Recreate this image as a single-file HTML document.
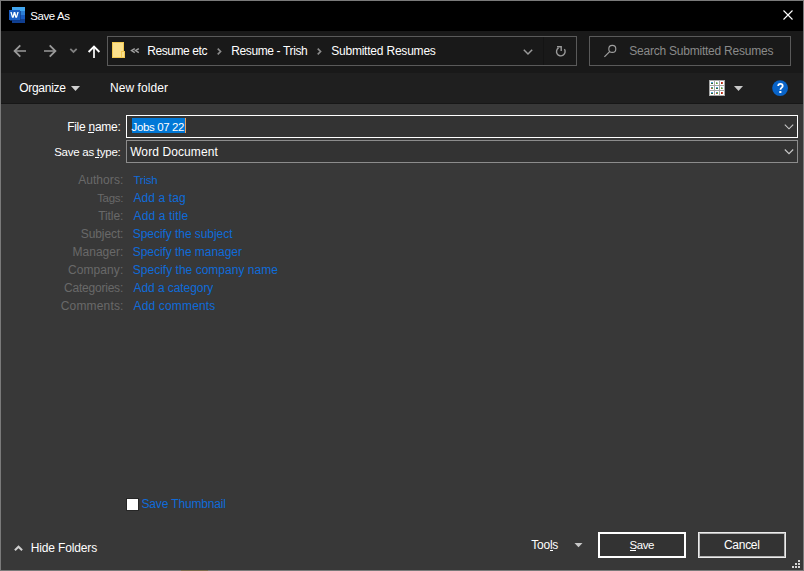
<!DOCTYPE html>
<html><head><meta charset="utf-8">
<style>
*{margin:0;padding:0;box-sizing:border-box}
html,body{width:804px;height:571px;overflow:hidden;background:#383838}
body{position:relative;font-family:"Liberation Sans",sans-serif;font-size:12px;color:#fff}
.a{position:absolute;white-space:nowrap;line-height:12px}
#frame{position:absolute;left:0;top:0;width:804px;height:571px;border:1px solid #7a7a7a}
#title{position:absolute;left:1px;top:1px;width:802px;height:30px;background:#000}
#nav{position:absolute;left:1px;top:31px;width:802px;height:42px;background:#191919}
#cmd{position:absolute;left:1px;top:73px;width:802px;height:31px;background:#1f1f1f;border-bottom:1px solid #171717}
#addr{position:absolute;left:107px;top:36px;width:470px;height:30px;border:1px solid #5a5a5a;background:#191919}
#search{position:absolute;left:589px;top:36px;width:202px;height:30px;border:1px solid #5a5a5a;background:#191919}
.inp{position:absolute;background:#333}
.btn{position:absolute;background:#333}
svg{position:absolute;left:0;top:0}

</style></head><body>
<div id="title"></div>
<div id="nav"></div>
<div id="cmd"></div>
<div id="addr"></div>
<div id="search"></div>
<div class="inp" style="left:126px;top:115px;width:672px;height:23px;border:1px solid #fff"></div>
<div class="inp" style="left:126px;top:140px;width:672px;height:23px;border:1px solid #8c8c8c"></div>
<div class="a" style="left:132px;top:118px;width:53px;height:15px;background:#0078d7"></div>
<div class="a" style="left:185px;top:118px;width:1px;height:15px;background:#e8a060"></div>
<div class="a" style="left:126px;top:498px;width:13px;height:13px;background:#fff;border:1px solid #262626"></div>
<div class="btn" style="left:598px;top:532px;width:88px;height:26px;border:2px solid #fff"></div>
<div class="btn" style="left:698px;top:532px;width:88px;height:26px;border:1px solid #ececec;box-shadow:inset 0 0 0 1px #b4b4b4"></div>
<div class="a" style="left:88px;top:132px;width:6px;height:1px;background:#fff"></div>
<div class="a" style="left:95px;top:157px;width:4px;height:1px;background:#fff"></div>
<div class="a" style="left:550px;top:550px;width:3px;height:1px;background:#fff"></div>
<div class="a" style="left:630px;top:550px;width:6px;height:1px;background:#fff"></div>

<div id="t_title" class="a" style="left:30.17px;top:10px;letter-spacing:-0.375px;color:#ffffff;font-size:11.5px">Save As</div>
<div id="t_r1" class="a" style="left:147.15px;top:45px;letter-spacing:-0.407px;color:#ffffff;font-size:12px">Resume etc</div>
<div id="t_r2" class="a" style="left:231.15px;top:45px;letter-spacing:-0.363px;color:#ffffff;font-size:12px">Resume - Trish</div>
<div id="t_r3" class="a" style="left:331.17px;top:45px;letter-spacing:-0.209px;color:#ffffff;font-size:12px">Submitted Resumes</div>
<div id="t_srch" class="a" style="left:629.30px;top:45px;letter-spacing:-0.230px;color:#8a8a8a;font-size:12px">Search Submitted Resumes</div>
<div id="t_org" class="a" style="left:19.15px;top:82px;letter-spacing:-0.271px;color:#ffffff;font-size:12px">Organize</div>
<div id="t_nf" class="a" style="left:109.98px;top:82px;letter-spacing:0.077px;color:#ffffff;font-size:12px">New folder</div>
<div id="t_fn" class="a" style="left:67.15px;top:121px;letter-spacing:-0.256px;color:#ffffff;font-size:12px">File name:</div>
<div id="t_st" class="a" style="left:54.15px;top:146px;letter-spacing:-0.254px;color:#ffffff;font-size:11.5px">Save as type:</div>
<div id="t_job" class="a" style="left:131.49px;top:121px;letter-spacing:-0.359px;color:#ffffff;font-size:11.5px">Jobs 07 22</div>
<div id="t_wd" class="a" style="left:130.17px;top:146px;letter-spacing:0.097px;color:#ffffff;font-size:12px">Word Document</div>
<div id="l1" class="a" style="left:78.15px;top:174px;letter-spacing:0.066px;color:#696969;font-size:12px">Authors:</div>
<div id="l2" class="a" style="left:97.13px;top:192px;letter-spacing:-0.318px;color:#696969;font-size:11.5px">Tags:</div>
<div id="l3" class="a" style="left:98.15px;top:210px;letter-spacing:-0.058px;color:#696969;font-size:12px">Title:</div>
<div id="l4" class="a" style="left:80.81px;top:228px;letter-spacing:-0.100px;color:#696969;font-size:12px">Subject:</div>
<div id="l5" class="a" style="left:72.62px;top:246px;letter-spacing:-0.001px;color:#696969;font-size:12px">Manager:</div>
<div id="l6" class="a" style="left:67.98px;top:264px;letter-spacing:0.090px;color:#696969;font-size:12px">Company:</div>
<div id="l7" class="a" style="left:63.98px;top:282px;letter-spacing:-0.212px;color:#696969;font-size:12px">Categories:</div>
<div id="l8" class="a" style="left:60.81px;top:300px;letter-spacing:0.162px;color:#696969;font-size:12px">Comments:</div>
<div id="k1" class="a" style="left:133.49px;top:174px;letter-spacing:-0.217px;color:#0f6bd8;font-size:11.5px">Trish</div>
<div id="k2" class="a" style="left:133.49px;top:192px;letter-spacing:0.091px;color:#0f6bd8;font-size:12px">Add a tag</div>
<div id="k3" class="a" style="left:133.49px;top:210px;letter-spacing:0.139px;color:#0f6bd8;font-size:12px">Add a title</div>
<div id="k4" class="a" style="left:132.79px;top:228px;letter-spacing:-0.057px;color:#0f6bd8;font-size:12px">Specify the subject</div>
<div id="k5" class="a" style="left:132.79px;top:246px;letter-spacing:-0.052px;color:#0f6bd8;font-size:12px">Specify the manager</div>
<div id="k6" class="a" style="left:132.79px;top:264px;letter-spacing:0.013px;color:#0f6bd8;font-size:12px">Specify the company name</div>
<div id="k7" class="a" style="left:133.49px;top:282px;letter-spacing:-0.069px;color:#0f6bd8;font-size:12px">Add a category</div>
<div id="k8" class="a" style="left:133.49px;top:300px;letter-spacing:0.168px;color:#0f6bd8;font-size:12px">Add comments</div>
<div id="t_thumb" class="a" style="left:141.47px;top:498px;letter-spacing:-0.148px;color:#0f6bd8;font-size:12px">Save Thumbnail</div>
<div id="t_hide" class="a" style="left:30.81px;top:542px;letter-spacing:-0.149px;color:#ffffff;font-size:12px">Hide Folders</div>
<div id="t_tools" class="a" style="left:531.34px;top:539px;letter-spacing:-0.250px;color:#ffffff;font-size:12px">Tools</div>
<div id="t_save" class="a" style="left:629.49px;top:539px;letter-spacing:-0.410px;color:#ffffff;font-size:11.5px">Save</div>
<div id="t_cancel" class="a" style="left:723.98px;top:539px;letter-spacing:-0.280px;color:#ffffff;font-size:12px">Cancel</div>
<svg width="804" height="571" viewBox="0 0 804 571">
<!-- word icon -->
<rect x="12" y="7" width="13" height="16" fill="#41a5ee"/>
<rect x="12" y="11" width="13" height="4" fill="#2b7cd3"/>
<rect x="12" y="15" width="13" height="4" fill="#185abd"/>
<rect x="12" y="19" width="13" height="4" fill="#103f91"/>
<rect x="10" y="11" width="11" height="10" fill="#0d3a85" opacity="0.7"/><rect x="9" y="10" width="11" height="10" fill="#1a5cc2"/>
<path d="M10.3 11.9 L12 17.8 L13.6 17.8 L14.5 14.8 L15.4 17.8 L17 17.8 L18.7 11.9 L17.3 11.9 L16.3 15.9 L15.3 11.9 L13.7 11.9 L12.7 15.9 L11.7 11.9 Z" fill="#fff"/>
<!-- close -->
<path d="M783.5 10.5 L792.5 19.5 M792.5 10.5 L783.5 19.5" stroke="#fff" stroke-width="1.1" fill="none"/>
<!-- back / forward -->
<path d="M15 51 H26" stroke="#9a9a9a" stroke-width="1.5" fill="none"/><path d="M20.3 45.3 L14.6 51 L20.3 56.7" stroke="#9a9a9a" stroke-width="1.8" fill="none"/>
<path d="M44 51 H55" stroke="#9a9a9a" stroke-width="1.5" fill="none"/><path d="M49.7 45.3 L55.4 51 L49.7 56.7" stroke="#9a9a9a" stroke-width="1.8" fill="none"/>
<!-- recent -->
<path d="M70.3 48.8 L73.5 52 L76.7 48.8" stroke="#7f7f7f" stroke-width="1.8" fill="none"/>
<!-- up -->
<path d="M94 47.5 V58" stroke="#fff" stroke-width="1.7" fill="none"/><path d="M88.6 52 L94 46.6 L99.4 52" stroke="#fff" stroke-width="1.9" fill="none"/>
<!-- folder -->
<rect x="112" y="42" width="12" height="16" fill="#f2c850"/>
<rect x="113" y="43" width="10" height="14" fill="#fbe08c"/>
<rect x="121" y="51" width="4" height="7" fill="#f2c850"/>
<rect x="122" y="52" width="2" height="5" fill="#fbe08c"/>
<!-- << -->
<path d="M134.8 48.6 L131.6 50.6 L134.8 52.6 M138.8 48.6 L135.6 50.6 L138.8 52.6" stroke="#a0a0a0" stroke-width="1.5" fill="none"/>
<!-- breadcrumb separators -->
<path d="M217.7 48.6 L220.6 51.5 L217.7 54.4" stroke="#8c8c8c" stroke-width="1.6" fill="none"/>
<path d="M317.7 48.6 L320.6 51.5 L317.7 54.4" stroke="#8c8c8c" stroke-width="1.6" fill="none"/>
<!-- address dropdown -->
<path d="M523.8 49.8 L528 54 L532.2 49.8" stroke="#9a9a9a" stroke-width="1.5" fill="none"/>
<rect x="543" y="37" width="1" height="28" fill="#141414"/>
<!-- refresh -->
<path d="M564.4 49.2 A4.3 4.3 0 1 1 558.6 47.9" stroke="#9a9a9a" stroke-width="1.4" fill="none"/>
<path d="M557 46.7 H561.2 V51" stroke="#9a9a9a" stroke-width="1.4" fill="none"/>
<!-- search -->
<circle cx="612.3" cy="48.9" r="3.5" stroke="#a0a0a0" stroke-width="1.1" fill="none"/>
<path d="M609.6 51.6 L604.4 56.8" stroke="#a0a0a0" stroke-width="1.2" fill="none"/>
<!-- organize triangle -->
<path d="M71 86 H80 L75.5 91 Z" fill="#d0d0d0"/>
<!-- view icon -->
<rect x="709" y="80" width="16" height="16" fill="#a8a8a8"/>
<g fill="#fff">
<rect x="710" y="81" width="4" height="4"/><rect x="715" y="81" width="4" height="4"/><rect x="720" y="81" width="4" height="4"/>
<rect x="710" y="86" width="4" height="4"/><rect x="715" y="86" width="4" height="4"/><rect x="720" y="86" width="4" height="4"/>
<rect x="710" y="91" width="4" height="4"/><rect x="715" y="91" width="4" height="4"/><rect x="720" y="91" width="4" height="4"/>
</g>
<rect x="711" y="82" width="1" height="1" fill="#5a9ed8"/><rect x="712" y="82" width="1" height="1" fill="#5a9ed8"/><rect x="711" y="83" width="1" height="1" fill="#2f6a3a"/><rect x="712" y="83" width="1" height="1" fill="#2f6a3a"/>
<rect x="716" y="82" width="1" height="1" fill="#8ab860"/><rect x="717" y="82" width="1" height="1" fill="#a8c8e8"/><rect x="716" y="83" width="1" height="1" fill="#5a9a40"/><rect x="717" y="83" width="1" height="1" fill="#98b070"/>
<rect x="721" y="82" width="1" height="1" fill="#c42a20"/><rect x="722" y="82" width="1" height="1" fill="#d05040"/><rect x="721" y="83" width="1" height="1" fill="#a82010"/><rect x="722" y="83" width="1" height="1" fill="#b86838"/>
<rect x="711" y="87" width="1" height="1" fill="#3a88d8"/><rect x="712" y="87" width="1" height="1" fill="#6aa848"/><rect x="711" y="88" width="1" height="1" fill="#e04a20"/><rect x="712" y="88" width="1" height="1" fill="#48a060"/>
<rect x="716" y="87" width="1" height="1" fill="#5a9ed8"/><rect x="717" y="87" width="1" height="1" fill="#5a9ed8"/><rect x="716" y="88" width="1" height="1" fill="#2f6a3a"/><rect x="717" y="88" width="1" height="1" fill="#2f6a3a"/>
<rect x="721" y="87" width="1" height="1" fill="#8ab860"/><rect x="722" y="87" width="1" height="1" fill="#a8c8e8"/><rect x="721" y="88" width="1" height="1" fill="#5a9a40"/><rect x="722" y="88" width="1" height="1" fill="#98b070"/>
<rect x="711" y="92" width="1" height="1" fill="#5a9ed8"/><rect x="712" y="92" width="1" height="1" fill="#5a9ed8"/><rect x="711" y="93" width="1" height="1" fill="#2f6a3a"/><rect x="712" y="93" width="1" height="1" fill="#2f6a3a"/>
<rect x="716" y="92" width="1" height="1" fill="#3a88d8"/><rect x="717" y="92" width="1" height="1" fill="#6aa848"/><rect x="716" y="93" width="1" height="1" fill="#e04a20"/><rect x="717" y="93" width="1" height="1" fill="#48a060"/>
<rect x="721" y="92" width="1" height="1" fill="#c42a20"/><rect x="722" y="92" width="1" height="1" fill="#d05040"/><rect x="721" y="93" width="1" height="1" fill="#a82010"/><rect x="722" y="93" width="1" height="1" fill="#b86838"/>
<!-- view dropdown -->
<path d="M734 86 H743 L738.5 91 Z" fill="#c8c8c8"/>
<!-- help -->
<circle cx="780.1" cy="88.1" r="7.9" fill="#0863c8"/>
<path d="M778.2 86.1 C778.2 84.5 779.2 83.9 780.5 83.9 C781.9 83.9 782.7 84.7 782.7 85.9 C782.7 87.6 780.4 87.7 780.4 89.8" stroke="#fff" stroke-width="1.8" fill="none"/>
<rect x="779.3" y="91" width="2.1" height="2" fill="#fff"/>
<!-- input chevrons -->
<path d="M784.8 124.6 L789 128.8 L793.2 124.6" stroke="#c8c8c8" stroke-width="1.1" fill="none"/>
<path d="M784.8 149.5 L789 153.7 L793.2 149.5" stroke="#c8c8c8" stroke-width="1.1" fill="none"/>
<!-- hide folders chevron -->
<path d="M14.9 550.3 L18.5 546.7 L22.1 550.3" stroke="#d0d0d0" stroke-width="2" fill="none"/>
<!-- tools triangle -->
<path d="M574.5 543 H582.5 L578.5 547.2 Z" fill="#c8c8c8"/>
<!-- grip -->
<g fill="#d4d4d4">
<rect x="798" y="560" width="2" height="2"/>
<rect x="795" y="563" width="2" height="2"/><rect x="798" y="563" width="2" height="2"/>
<rect x="792" y="566" width="2" height="2"/><rect x="795" y="566" width="2" height="2"/><rect x="798" y="566" width="2" height="2"/>
</g>
</svg>

<div id="frame"></div>
<div style="position:absolute;left:181px;top:570px;width:27px;height:1px;background:#7c6d4f"></div>
</body></html>
